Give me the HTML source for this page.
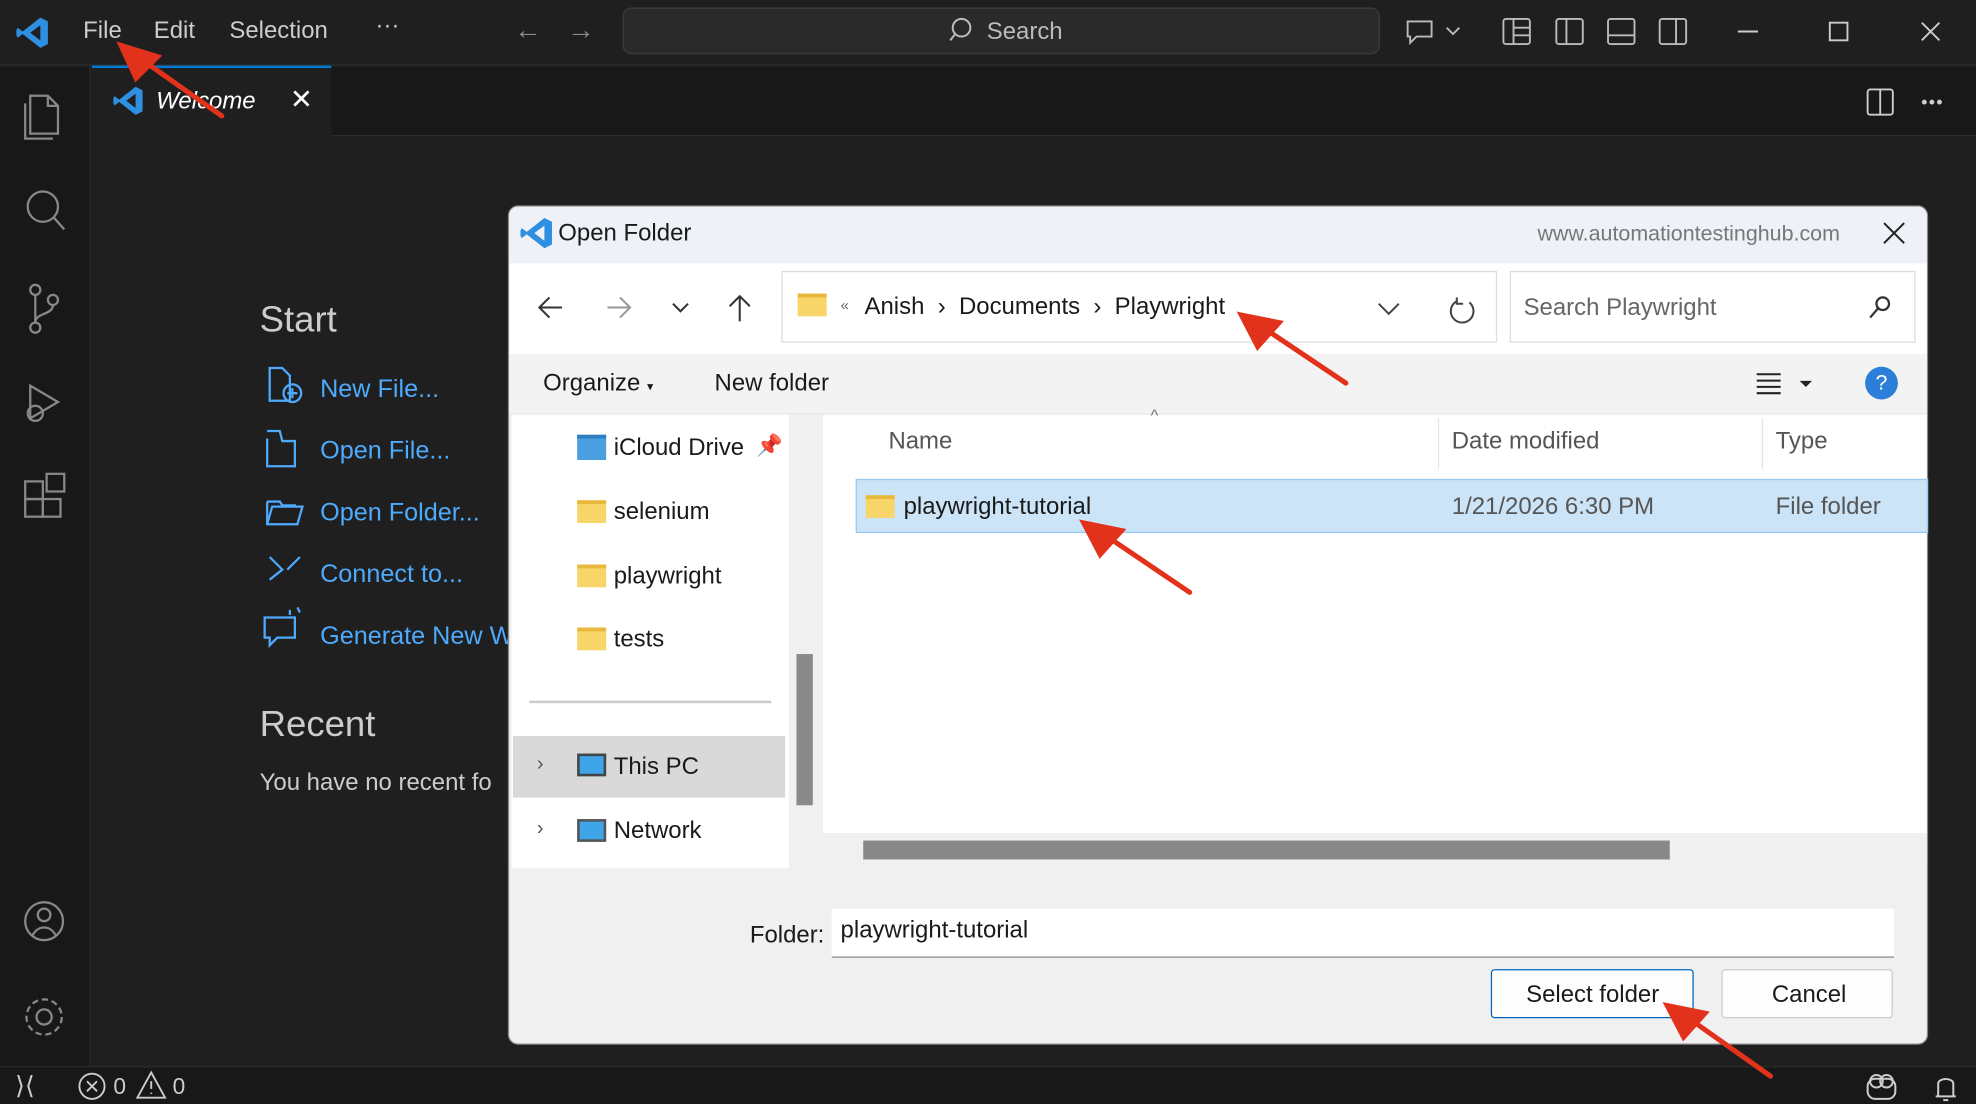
<!DOCTYPE html>
<html><head><meta charset="utf-8">
<style>
*{box-sizing:border-box;margin:0;padding:0}
html,body{width:1976px;height:1104px;overflow:hidden;background:#1f1f1f}
#w{position:absolute;left:0;top:0;width:1568px;height:876px;transform:scale(1.26020);transform-origin:0 0;font-family:"Liberation Sans",sans-serif;background:#1f1f1f;color:#ccc}
.a{position:absolute}
.t{position:absolute;white-space:nowrap}
svg{position:absolute;overflow:visible}
.d{color:#1a1a1a;font-size:19px}
</style></head><body><div id="w">
<!-- title bar -->
<div class="a" style="left:0;top:0;width:1568px;height:52px;background:#1f1f1f;border-bottom:1px solid #2b2b2b"></div>
<svg style="left:12px;top:12px" width="28" height="28" viewBox="0 0 28 28"><path d="M20 2 L26 5 V23 L20 26 L6 15 L2 18 L1 16 V12 L2 10 L6 13 Z M20 8 L12 14 L20 20 Z" fill="#2f8fe0"/></svg>
<div class="t" style="left:66px;top:14px;font-size:19px;color:#ccc">File</div>
<div class="t" style="left:122px;top:14px;font-size:19px;color:#ccc">Edit</div>
<div class="t" style="left:182px;top:14px;font-size:19px;color:#ccc">Selection</div>
<div class="t" style="left:298px;top:10px;font-size:19px;color:#ccc">···</div>
<div class="t" style="left:408px;top:11px;font-size:22px;color:#888">←</div>
<div class="t" style="left:450px;top:11px;font-size:22px;color:#888">→</div>
<div class="a" style="left:494px;top:6px;width:601px;height:37px;border:1px solid #3c3c3c;border-radius:7px;background:#2a2a2a"></div>
<svg style="left:754px;top:14px" width="20" height="20"><circle cx="9" cy="8" r="7" stroke="#bbb" stroke-width="1.6" fill="none"/><path d="M4 13 L0 18" stroke="#bbb" stroke-width="1.6"/></svg>
<div class="t" style="left:783px;top:15px;font-size:19px;color:#bbb">Search</div>
<svg style="left:1114px;top:13px" width="50" height="24" fill="none" stroke="#bbb" stroke-width="1.5"><path d="M3 4 H22 V16 H10 L5 21 V16 H3 Z"/><path d="M34 9 L39 14 L44 9"/></svg>
<svg style="left:1192px;top:14px" width="150" height="24" fill="none" stroke="#bbb" stroke-width="1.5"><rect x="1" y="1" width="21" height="20" rx="2"/><path d="M9 1V21 M9 8H22 M9 14H22"/><rect x="43" y="1" width="21" height="20" rx="2"/><path d="M51 1V21"/><rect x="84" y="1" width="21" height="20" rx="2"/><path d="M84 14H105"/><rect x="125" y="1" width="21" height="20" rx="2"/><path d="M138 1V21"/></svg>
<svg style="left:1378px;top:14px" width="170" height="24" fill="none" stroke="#ccc" stroke-width="1.5"><path d="M1 11H17"/><rect x="74" y="4" width="14" height="14"/><path d="M147 4L161 18M161 4L147 18"/></svg>
<!-- activity bar -->
<div class="a" style="left:0;top:53px;width:72px;height:793px;background:#181818;border-right:1px solid #2b2b2b"></div>
<svg style="left:18px;top:70px" width="40" height="760" fill="none" stroke="#888" stroke-width="1.8">
<path d="M6 6H20L28 14V36H6Z M20 6V14H28 M2 12V40H24"/>
<circle cx="16" cy="94" r="12"/><path d="M25 103L33 112"/>
<circle cx="10" cy="160" r="4"/><circle cx="10" cy="190" r="4"/><circle cx="24" cy="168" r="4"/><path d="M10 164V186 M24 172C24 180 10 178 10 186"/>
<path d="M6 236V262L28 249Z"/><circle cx="10" cy="258" r="6"/>
<rect x="2" y="312" width="14" height="14"/><rect x="2" y="326" width="14" height="14"/><rect x="16" y="326" width="14" height="14"/><rect x="19" y="306" width="14" height="14" transform="rotate(0)"/>
<circle cx="17" cy="661" r="15"/><circle cx="17" cy="656" r="5"/><path d="M8 672C12 664 22 664 26 672"/>
<circle cx="17" cy="737" r="6"/><circle cx="17" cy="737" r="14" stroke-dasharray="5 3"/>
</svg>
<!-- tabs -->
<div class="a" style="left:73px;top:53px;width:1495px;height:55px;background:#181818;border-bottom:1px solid #2b2b2b"></div>
<div class="a" style="left:73px;top:52px;width:190px;height:56px;background:#1f1f1f;border-top:2px solid #0078d4"></div>
<svg style="left:89px;top:67px" width="26" height="26" viewBox="0 0 28 28"><path d="M20 2 L26 5 V23 L20 26 L6 15 L2 18 L1 16 V12 L2 10 L6 13 Z M20 8 L12 14 L20 20 Z" fill="#2f8fe0"/></svg>
<div class="t" style="left:124px;top:70px;font-size:19px;color:#fff;font-style:italic">Welcome</div>
<div class="t" style="left:230px;top:66px;font-size:22px;color:#fff">✕</div>
<svg style="left:1481px;top:70px" width="70" height="22" fill="none" stroke="#ccc" stroke-width="1.5"><rect x="1" y="1" width="20" height="20" rx="2"/><path d="M11 1V21"/><circle cx="46" cy="11" r="1.2" fill="#ccc"/><circle cx="52" cy="11" r="1.2" fill="#ccc"/><circle cx="58" cy="11" r="1.2" fill="#ccc"/></svg>
<!-- welcome content -->
<div class="t" style="left:206px;top:238px;font-size:29px;color:#ccc">Start</div>
<svg style="left:208px;top:290px" width="36" height="240" fill="none" stroke="#4daafc" stroke-width="1.8"><path d="M6 2H16L22 8V28H6Z"/><circle cx="24" cy="22" r="7"/><path d="M24 18V26M20 22H28"/><path d="M4 58V80H26V60H16L14 52H4"/><path d="M4 108V126H28L32 112H8L4 126 M4 108H14L16 111H26V112"/><path d="M6 152L16 162L6 170 M30 152L20 162"/><path d="M2 200H26V216H12L6 222V216H2Z M28 192L30 196M22 194V198"/></svg>
<div class="t" style="left:254px;top:298px;font-size:20px;color:#4daafc">New File...</div>
<div class="t" style="left:254px;top:347px;font-size:20px;color:#4daafc">Open File...</div>
<div class="t" style="left:254px;top:396px;font-size:20px;color:#4daafc">Open Folder...</div>
<div class="t" style="left:254px;top:445px;font-size:20px;color:#4daafc">Connect to...</div>
<div class="t" style="left:254px;top:494px;font-size:20px;color:#4daafc">Generate New W</div>
<div class="t" style="left:206px;top:559px;font-size:29px;color:#ccc">Recent</div>
<div class="t" style="left:206px;top:611px;font-size:19px;color:#ccc">You have no recent fo</div>
<!-- status bar -->
<div class="a" style="left:0;top:846px;width:1568px;height:30px;background:#181818;border-top:1px solid #2b2b2b"></div>
<div class="t" style="left:12px;top:849px;font-size:20px;color:#ccc">⟩⟨</div>
<svg style="left:62px;top:851px" width="22" height="22" fill="none" stroke="#ccc" stroke-width="1.5"><circle cx="11" cy="11" r="10"/><path d="M7 7L15 15M15 7L7 15"/></svg>
<div class="t" style="left:90px;top:852px;font-size:18px;color:#ccc">0</div>
<svg style="left:108px;top:850px" width="24" height="22" fill="none" stroke="#ccc" stroke-width="1.5"><path d="M12 1L23 21H1Z M12 8V14 M12 17V18"/></svg>
<div class="t" style="left:137px;top:852px;font-size:18px;color:#ccc">0</div>
<svg style="left:1480px;top:850px" width="80" height="24" fill="none" stroke="#ccc" stroke-width="1.6"><rect x="2" y="6" width="22" height="16" rx="6"/><circle cx="9" cy="8" r="5"/><circle cx="17" cy="8" r="5"/><path d="M58 20V10C58 5 70 5 70 10V20H56M72 20H56 M62 23H66"/></svg>
<!-- dialog -->
<div class="a" style="left:403px;top:163px;width:1127px;height:666px;background:#f0f0f0;border:1px solid #888;border-radius:8px;overflow:hidden">
 <div class="a" style="left:0;top:0;width:1127px;height:45px;background:#eef1f7"></div>
 <div class="a" style="left:0;top:45px;width:1127px;height:72px;background:#fff"></div>
 <div class="a" style="left:0;top:117px;width:1127px;height:48px;background:#f3f3f3;border-bottom:1px solid #e5e5e5"></div>
 <div class="a" style="left:2px;top:165px;width:220px;height:360px;background:#fff"></div>
 <div class="a" style="left:222px;top:165px;width:26px;height:360px;background:#f0f0f0"></div>
 <div class="a" style="left:228px;top:355px;width:13px;height:120px;background:#8a8a8a"></div>
 <div class="a" style="left:249px;top:165px;width:878px;height:332px;background:#fff"></div>
 <div class="a" style="left:249px;top:497px;width:878px;height:28px;background:#f0f0f0"></div>
 <div class="a" style="left:281px;top:503px;width:640px;height:15px;background:#888"></div>
</div>
<svg style="left:412px;top:171px" width="28" height="28" viewBox="0 0 28 28"><path d="M20 2 L26 5 V23 L20 26 L6 15 L2 18 L1 16 V12 L2 10 L6 13 Z M20 8 L12 14 L20 20 Z" fill="#2f8fe0"/></svg>
<div class="t d" style="left:443px;top:175px">Open Folder</div>
<div class="t" style="left:1220px;top:176px;font-size:17px;color:#777">www.automationtestinghub.com</div>
<svg style="left:1494px;top:176px" width="18" height="18" stroke="#222" stroke-width="1.6"><path d="M1 1L17 17M17 1L1 17"/></svg>
<svg style="left:426px;top:233px" width="180" height="24" fill="none" stroke-width="1.6"><path d="M2 11H20M10 3L2 11L10 19" stroke="#333"/><path d="M56 11H74M66 3L74 11L66 19" stroke="#999"/><path d="M108 8L114 14L120 8" stroke="#333"/><path d="M161 2V22M153 10L161 2L169 10" stroke="#333"/></svg>
<div class="a" style="left:620px;top:215px;width:568px;height:57px;border:1px solid #ddd;background:#fff"></div>
<div class="a" style="left:633px;top:233px;width:23px;height:18px;background:#f7d568;border-top:3px solid #e8b83c"></div>
<div class="t" style="left:667px;top:235px;font-size:12px;color:#666">«</div>
<div class="t d" style="left:686px;top:233px">Anish&nbsp;&nbsp;›&nbsp;&nbsp;Documents&nbsp;&nbsp;›&nbsp;&nbsp;Playwright</div>
<svg style="left:1092px;top:236px" width="80" height="22" fill="none" stroke="#444" stroke-width="1.6"><path d="M2 5L10 13L18 5"/><path d="M74 4A9 9 0 1 1 64 3M64 0V5H69"/></svg>
<div class="a" style="left:1198px;top:215px;width:322px;height:57px;border:1px solid #ddd;background:#fff"></div>
<div class="t" style="left:1209px;top:234px;font-size:19px;color:#666">Search Playwright</div>
<svg style="left:1482px;top:234px" width="20" height="20" fill="none" stroke="#333" stroke-width="1.8"><circle cx="12" cy="7" r="5"/><path d="M8 11L2 18"/></svg>
<div class="t d" style="left:431px;top:294px">Organize <span style="font-size:10px">▾</span></div>
<div class="t d" style="left:567px;top:294px">New folder</div>
<svg style="left:1394px;top:295px" width="46" height="18" stroke="#222" stroke-width="1.6"><path d="M0 2H19M0 7H19M0 12H19M0 17H19"/><path d="M36 8L42 8L39 11Z" fill="#333"/></svg>
<div class="a" style="left:1480px;top:291px;width:26px;height:26px;border-radius:50%;background:#2b7fd8;color:#fff;text-align:center;font-size:17px;line-height:26px">?</div>
<!-- nav tree -->
<div class="a" style="left:458px;top:345px;width:23px;height:20px;background:#4a9fe0;border-top:3px solid #2f7ec0"></div>
<div class="t d" style="left:487px;top:345px">iCloud Drive</div>
<div class="t" style="left:600px;top:344px;font-size:17px;color:#999">📌</div>
<div class="a" style="left:458px;top:397px;width:23px;height:18px;background:#f7d568;border-top:3px solid #e8b83c"></div>
<div class="t d" style="left:487px;top:396px">selenium</div>
<div class="a" style="left:458px;top:448px;width:23px;height:18px;background:#f7d568;border-top:3px solid #e8b83c"></div>
<div class="t d" style="left:487px;top:447px">playwright</div>
<div class="a" style="left:458px;top:498px;width:23px;height:18px;background:#f7d568;border-top:3px solid #e8b83c"></div>
<div class="t d" style="left:487px;top:497px">tests</div>
<div class="a" style="left:420px;top:556px;width:192px;height:2px;background:#ccc"></div>
<div class="a" style="left:407px;top:584px;width:216px;height:49px;background:#d9d9d9"></div>
<div class="t" style="left:426px;top:598px;font-size:16px;color:#555">›</div>
<div class="a" style="left:458px;top:598px;width:23px;height:18px;background:#3fa4e8;border:2px solid #444"></div>
<div class="t d" style="left:487px;top:598px">This PC</div>
<div class="t" style="left:426px;top:649px;font-size:16px;color:#555">›</div>
<div class="a" style="left:458px;top:650px;width:23px;height:18px;background:#3fa4e8;border:2px solid #555"></div>
<div class="t d" style="left:487px;top:649px">Network</div>
<!-- list -->
<div class="t" style="left:913px;top:322px;font-size:13px;color:#777">^</div>
<div class="t" style="left:705px;top:340px;font-size:19px;color:#555">Name</div>
<div class="a" style="left:1141px;top:332px;width:1px;height:40px;background:#e5e5e5"></div>
<div class="t" style="left:1152px;top:340px;font-size:19px;color:#555">Date modified</div>
<div class="a" style="left:1398px;top:332px;width:1px;height:40px;background:#e5e5e5"></div>
<div class="t" style="left:1409px;top:340px;font-size:19px;color:#555">Type</div>
<div class="a" style="left:679px;top:380px;width:851px;height:43px;background:#cce4f7;border:1px solid #99c9ef"></div>
<div class="a" style="left:687px;top:393px;width:23px;height:18px;background:#f7d568;border-top:3px solid #e8b83c"></div>
<div class="t d" style="left:717px;top:392px">playwright-tutorial</div>
<div class="t" style="left:1152px;top:392px;font-size:19px;color:#555">1/21/2026 6:30 PM</div>
<div class="t" style="left:1409px;top:392px;font-size:19px;color:#555">File folder</div>
<!-- bottom -->
<div class="t d" style="left:595px;top:732px">Folder:</div>
<div class="a" style="left:660px;top:721px;width:843px;height:39px;background:#fff;border-bottom:1px solid #888"></div>
<div class="t d" style="left:667px;top:728px">playwright-tutorial</div>
<div class="a" style="left:1183px;top:769px;width:161px;height:39px;background:#fdfdfd;border:1px solid #0067c0;border-radius:3px"></div>
<div class="t d" style="left:1211px;top:779px">Select folder</div>
<div class="a" style="left:1366px;top:769px;width:136px;height:39px;background:#fdfdfd;border:1px solid #ccc;border-radius:3px"></div>
<div class="t d" style="left:1406px;top:779px">Cancel</div>
<!-- red arrows -->
<svg style="left:0;top:0" width="1568" height="876" fill="none" stroke="#e2321c" stroke-width="4" stroke-linecap="round">
<path d="M176 92L105 42"/><path d="M96 36L125 45L108 62Z" fill="#e2321c"/>
<path d="M1068 304L995 255"/><path d="M985 250L1015 256L998 275Z" fill="#e2321c"/>
<path d="M944 470L870 420"/><path d="M860 415L890 421L873 440Z" fill="#e2321c"/>
<path d="M1405 854L1333 803"/><path d="M1323 798L1353 804L1336 823Z" fill="#e2321c"/>
</svg>
</div></body></html>
